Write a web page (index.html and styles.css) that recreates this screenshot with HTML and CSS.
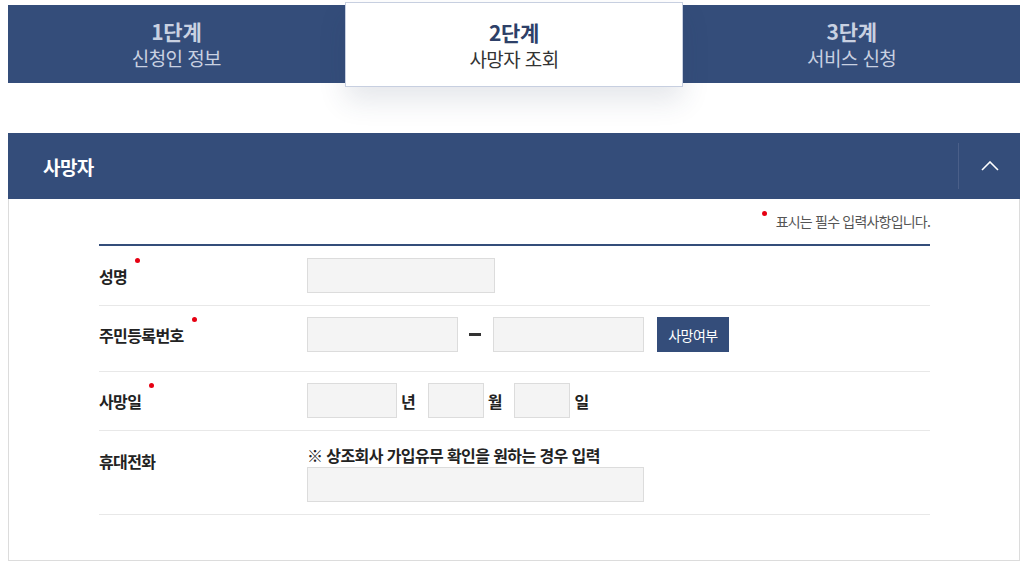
FILE: index.html
```html
<!DOCTYPE html>
<html lang="ko">
<head>
    <meta charset="UTF-8">
    <meta name="viewport" content="width=device-width, initial-scale=1.0">
    <title>사망자 조회</title>
    <link rel="stylesheet" href="styles.css">
</head>
<body>
    <div class="wrap">
        <ol class="steps">
            <li class="step">
                <span class="step-no">1단계</span>
                <span class="step-name">신청인 정보</span>
            </li>
            <li class="step active">
                <span class="step-no">2단계</span>
                <span class="step-name">사망자 조회</span>
            </li>
            <li class="step">
                <span class="step-no">3단계</span>
                <span class="step-name">서비스 신청</span>
            </li>
        </ol>

        <div class="section">
            <div class="section-head">
                <h2 class="section-title">사망자</h2>
                <button class="toggle" type="button" aria-label="접기">
                    <svg width="18" height="10" viewBox="0 0 18 10">
                        <path d="M1 9 L9 1 L17 9" fill="none" stroke="#fff" stroke-width="1.6"/>
                    </svg>
                </button>
            </div>

            <div class="section-body">
                <p class="req-note"><span class="dot"></span>표시는 필수 입력사항입니다.</p>

                <div class="form">
                    <div class="row">
                        <div class="label">성명<span class="dot"></span></div>
                        <div class="field">
                            <input class="input w-name" type="text">
                        </div>
                    </div>

                    <div class="row row-jumin">
                        <div class="label">주민등록번호<span class="dot"></span></div>
                        <div class="field">
                            <input class="input w-jumin" type="text">
                            <span class="dash"></span>
                            <input class="input w-jumin" type="password">
                            <button class="btn" type="button">사망여부</button>
                        </div>
                    </div>

                    <div class="row row-date">
                        <div class="label">사망일<span class="dot"></span></div>
                        <div class="field">
                            <input class="input w-year" type="text">
                            <span class="unit">년</span>
                            <input class="input w-md" type="text">
                            <span class="unit">월</span>
                            <input class="input w-md" type="text">
                            <span class="unit">일</span>
                        </div>
                    </div>

                    <div class="row row-phone">
                        <div class="label">휴대전화</div>
                        <div class="field field-col">
                            <p class="field-note">※ 상조회사 가입유무 확인을 원하는 경우 입력</p>
                            <input class="input w-phone" type="text">
                        </div>
                    </div>
                </div>
            </div>
        </div>
    </div>
</body>
</html>
```

FILE: styles.css
```css
* {
    margin: 0;
    padding: 0;
    box-sizing: border-box;
}

body {
    font-family: "Noto Sans CJK KR", "Noto Sans", sans-serif;
    color: #333;
    background: #fff;
}

.wrap {
    padding: 5px 14px 0 8px;
}

/* steps */
.steps {
    list-style: none;
    display: flex;
    height: 78px;
    background: #344d7a;
}

.step {
    flex: 1;
    display: flex;
    flex-direction: column;
    align-items: center;
    justify-content: center;
    color: #c9d1e1;
}

.step-no {
    font-size: 21px;
    font-weight: bold;
    line-height: 26px;
    letter-spacing: -0.3px;
}

.step-name {
    font-size: 19px;
    line-height: 24px;
    margin-top: 2px;
    letter-spacing: -0.6px;
}

.step.active {
    margin: -3px 0 -4px;
    background: #fff;
    border: 1px solid #c7cfe0;
    box-shadow: 0 14px 28px rgba(40, 55, 90, 0.12);
    position: relative;
    z-index: 1;
}

.step.active .step-no {
    color: #2d4068;
}

.step.active .step-name {
    color: #333;
}

/* section */
.section {
    margin-top: 50px;
}

.section-head {
    height: 66px;
    background: #344d7a;
    display: flex;
    align-items: center;
    padding-left: 35px;
}

.section-title {
    flex: 1;
    font-size: 19px;
    font-weight: bold;
    color: #fff;
    letter-spacing: -0.6px;
}

.toggle {
    width: 62px;
    height: 46px;
    border: none;
    border-left: 1px solid #4a5f89;
    background: transparent;
    display: flex;
    align-items: center;
    justify-content: center;
    cursor: pointer;
}

.section-body {
    border: 1px solid #dcdcdc;
    border-top: none;
    padding: 12px 89px 45px 90px;
}

.dot {
    display: inline-block;
    width: 5px;
    height: 5px;
    border-radius: 50%;
    background: #e60012;
    vertical-align: top;
}

.req-note {
    text-align: right;
    font-size: 14px;
    line-height: 20px;
    color: #555;
    letter-spacing: -0.8px;
    margin-bottom: 13px;
}

.req-note .dot {
    margin-right: 9px;
}

.form {
    border-top: 2px solid #344d7a;
}

.row {
    display: flex;
    align-items: center;
    padding: 12px 0;
    border-bottom: 1px solid #e8e8e8;
}

.row-jumin {
    padding: 11px 0 19px;
}

.row-date {
    padding: 11px 0 12px;
}

.row-phone {
    align-items: flex-start;
    padding: 14px 0 12px;
}

.label {
    width: 208px;
    font-size: 16px;
    font-weight: bold;
    line-height: 22px;
    color: #222;
    letter-spacing: -0.6px;
}

.label .dot {
    margin-left: 8px;
    position: relative;
    top: -7px;
}

.row-phone .label {
    margin-top: 5px;
}

.field {
    display: flex;
    align-items: center;
}

.field-col {
    flex-direction: column;
    align-items: flex-start;
}

.input {
    height: 35px;
    border: 1px solid #dcdcdc;
    background: #f4f4f4;
    font-family: inherit;
    font-size: 14px;
    padding: 0 10px;
}

.w-name { width: 188px; }
.w-jumin { width: 151px; }
.w-year { width: 90px; }
.w-md { width: 56px; }
.w-phone { width: 337px; margin-top: 2px; }

.dash {
    width: 12px;
    height: 3px;
    background: #333;
    margin: 0 12px 0 11px;
}

.unit {
    font-size: 16px;
    font-weight: bold;
    color: #222;
    margin: 0 12px 0 4px;
}

.btn {
    margin-left: 13px;
    width: 72px;
    height: 35px;
    border: none;
    background: #344d7a;
    color: #fff;
    font-family: inherit;
    font-size: 14px;
    letter-spacing: -0.5px;
    cursor: pointer;
}

.field-note {
    font-size: 16px;
    font-weight: bold;
    line-height: 20px;
    color: #222;
    letter-spacing: -0.6px;
}
```
